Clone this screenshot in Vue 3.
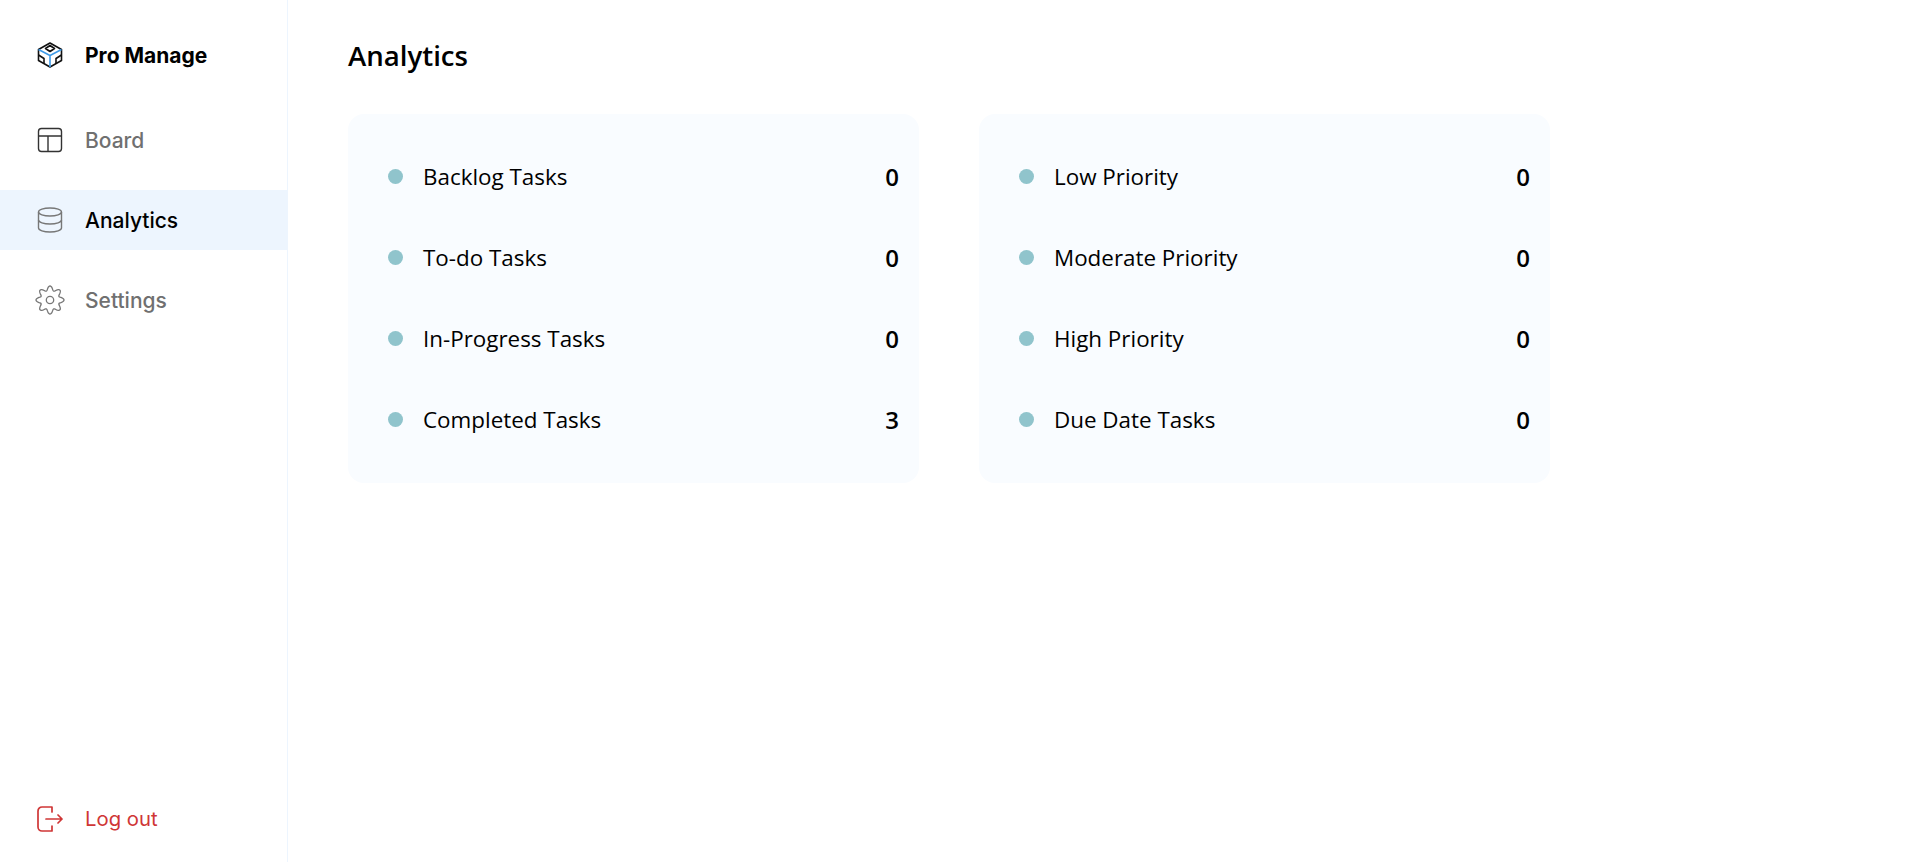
<script setup>
import { ref } from "vue";

const taskStats = ref([
  { label: "Backlog Tasks", count: 0 },
  { label: "To-do Tasks", count: 0 },
  { label: "In-Progress Tasks", count: 0 },
  { label: "Completed Tasks", count: 3 },
]);

const priorityStats = ref([
  { label: "Low Priority", count: 0 },
  { label: "Moderate Priority", count: 0 },
  { label: "High Priority", count: 0 },
  { label: "Due Date Tasks", count: 0 },
]);

// wavy outline of the settings cog, 8 rounded teeth
const gearPoints = [];
for (let i = 0; i < 160; i++) {
  const angle = (i / 160) * Math.PI * 2;
  const radius = 11.8 + 2.2 * Math.cos(angle * 8);
  const x = 15 + radius * Math.sin(angle);
  const y = 15 - radius * Math.cos(angle);
  gearPoints.push(x.toFixed(2) + "," + y.toFixed(2));
}
const gearOutline = gearPoints.join(" ");
</script>

<template>
  <div class="layout">
    <aside class="sidebar">
      <div class="brand">
        <svg class="icon" viewBox="0 0 26 26" fill="none" stroke-width="1.6" stroke-linejoin="round">
          <path d="M13 1 24.500 7.500v11L13 25 1.500 18.500v-11z" stroke="#111" />
          <path d="M13 3.500l4.500 3-4.500 3-4.500-3z" stroke="#111" />
          <path d="M1.500 13 7 16.500V22M24.500 13 19 16.500V22" stroke="#111" />
          <path d="M1.500 7.500 13 13.500l11.500-6M13 13.500V25" stroke="#3f9be8" />
        </svg>
        <span>Pro Manage</span>
      </div>

      <nav class="nav">
        <div class="nav-item">
          <svg class="icon" viewBox="0 0 26 26" fill="none" stroke="#333" stroke-width="1.4">
            <rect x="1.500" y="1.500" width="23" height="23" rx="3" />
            <path d="M1.500 9h23M11 9v15.500" />
          </svg>
          <span>Board</span>
        </div>
        <div class="nav-item active">
          <svg class="icon" viewBox="0 0 26 26" fill="none" stroke="#777" stroke-width="1.4">
            <ellipse cx="13" cy="5" rx="11.500" ry="4" />
            <path d="M1.500 5v16c0 2.200 5.200 4 11.500 4s11.500-1.800 11.500-4V5" />
            <path d="M1.500 13c0 2.200 5.200 4 11.500 4s11.500-1.800 11.500-4" />
          </svg>
          <span>Analytics</span>
        </div>
        <div class="nav-item">
          <svg class="icon gear" viewBox="0 0 30 30" fill="none" stroke="#777" stroke-width="1.300">
            <circle cx="15" cy="15" r="3.700" />
            <polygon :points="gearOutline" />
          </svg>
          <span>Settings</span>
        </div>
      </nav>

      <div class="logout">
        <svg class="icon" viewBox="0 0 26 26" fill="none" stroke="#cf3636" stroke-width="1.700" stroke-linecap="round" stroke-linejoin="round">
          <path d="M15 6V1H5A4 4 0 0 0 1 5v16a4 4 0 0 0 4 4h10v-5" />
          <path d="M9 13h16M21 9l4 4-4 4" />
        </svg>
        <span>Log out</span>
      </div>
    </aside>

    <main class="content">
      <h1 class="title">Analytics</h1>
      <div class="cards">
        <div class="card">
          <div class="row" v-for="item in taskStats" :key="item.label">
            <i class="dot"></i>
            <span class="label">{{ item.label }}</span>
            <span class="count">{{ item.count }}</span>
          </div>
        </div>
        <div class="card">
          <div class="row" v-for="item in priorityStats" :key="item.label">
            <i class="dot"></i>
            <span class="label">{{ item.label }}</span>
            <span class="count">{{ item.count }}</span>
          </div>
        </div>
      </div>
    </main>
  </div>
</template>

<style scoped>
.layout {
  display: flex;
  width: 1915px;
  height: 862px;
  background: #fff;
  overflow: hidden;
}

.sidebar {
  width: 288px;
  flex-shrink: 0;
  box-sizing: border-box;
  border-right: 1px solid #edf5fe;
  display: flex;
  flex-direction: column;
  font-family: "Inter", "Noto Sans", sans-serif;
  font-size: 21px;
}

.icon {
  width: 26px;
  height: 26px;
  flex-shrink: 0;
}

.gear {
  width: 30px;
  height: 30px;
  margin: 0 -2px;
}

.brand,
.nav-item,
.logout {
  display: flex;
  align-items: center;
  gap: 22px;
  padding-left: 37px;
}

.brand {
  height: 60px;
  margin-top: 25px;
  color: #000;
  font-weight: 700;
}

.nav {
  margin-top: 25px;
  display: flex;
  flex-direction: column;
  gap: 20px;
}

.nav-item {
  height: 60px;
  color: #707070;
  font-weight: 500;
}

.nav-item.active {
  background: #edf5fe;
  color: #000;
}

.logout {
  margin-top: auto;
  height: 60px;
  margin-bottom: 13px;
  color: #cf3636;
  font-weight: 400;
  font-size: 20.300px;
}

.logout span {
  margin-top: -2px;
}

.content {
  flex: 1;
  padding: 0 60px;
  font-family: "Open Sans", "Noto Sans", sans-serif;
}

.title {
  margin: 0;
  height: 114px;
  padding-top: 35px;
  box-sizing: border-box;
  font-size: 27.600px;
  line-height: 40px;
  font-weight: 600;
  color: #000;
}

.cards {
  display: flex;
  gap: 60px;
}

.card {
  width: 571px;
  height: 369px;
  box-sizing: border-box;
  padding: 45px 20px 47px 40px;
  border-radius: 16px;
  background: #f9fcff;
  display: flex;
  flex-direction: column;
  justify-content: space-between;
}

.row {
  display: flex;
  align-items: center;
  height: 34px;
  color: #000;
  font-size: 22.400px;
}

.dot {
  width: 15px;
  height: 15px;
  border-radius: 50%;
  background: #90c4cc;
  margin-right: 20px;
}

.label {
  flex: 1;
}

.count {
  font-weight: 600;
  font-size: 24px;
  padding-top: 1px;
}
</style>
